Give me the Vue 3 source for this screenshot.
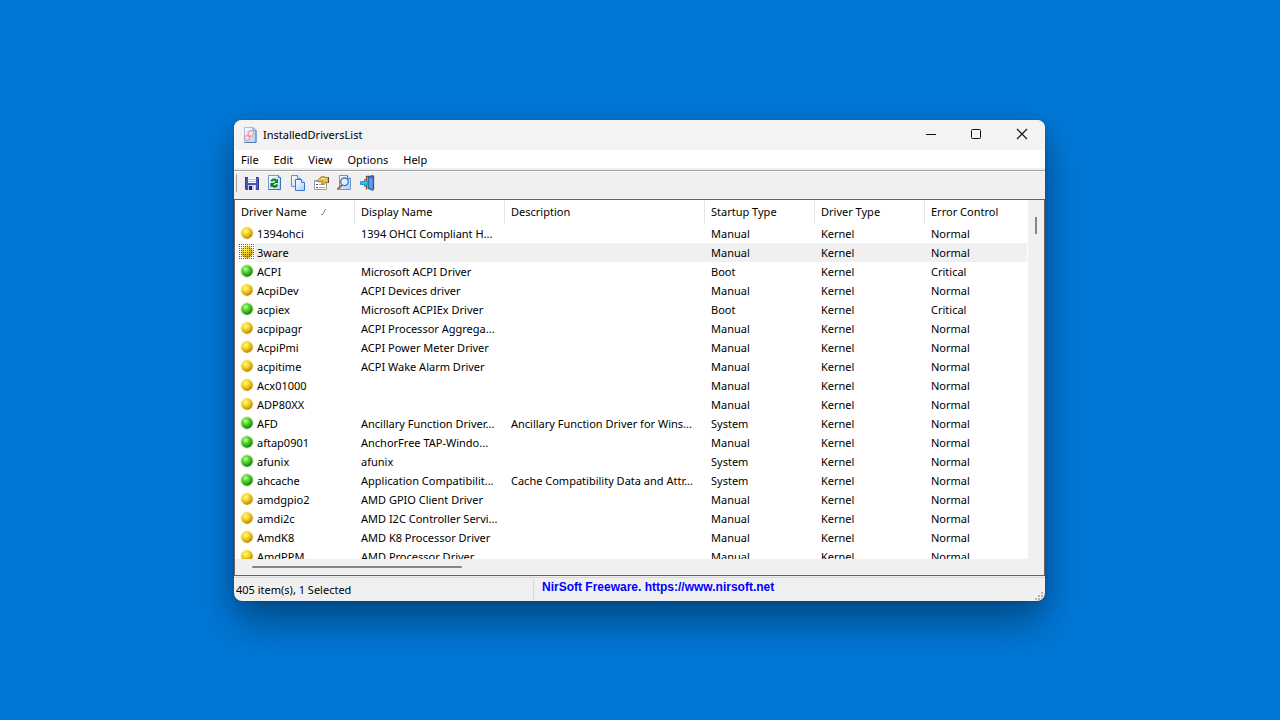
<script setup>
import { ref } from 'vue'

const menus = ['File', 'Edit', 'View', 'Options', 'Help']
const columns = ['Driver Name', 'Display Name', 'Description', 'Startup Type', 'Driver Type', 'Error Control']
const selected = ref('3ware')

const drivers = [
  ['1394ohci', '1394 OHCI Compliant H...', '', 'Manual', 'Normal', false],
  ['3ware', '', '', 'Manual', 'Normal', false],
  ['ACPI', 'Microsoft ACPI Driver', '', 'Boot', 'Critical', true],
  ['AcpiDev', 'ACPI Devices driver', '', 'Manual', 'Normal', false],
  ['acpiex', 'Microsoft ACPIEx Driver', '', 'Boot', 'Critical', true],
  ['acpipagr', 'ACPI Processor Aggrega...', '', 'Manual', 'Normal', false],
  ['AcpiPmi', 'ACPI Power Meter Driver', '', 'Manual', 'Normal', false],
  ['acpitime', 'ACPI Wake Alarm Driver', '', 'Manual', 'Normal', false],
  ['Acx01000', '', '', 'Manual', 'Normal', false],
  ['ADP80XX', '', '', 'Manual', 'Normal', false],
  ['AFD', 'Ancillary Function Driver...', 'Ancillary Function Driver for Wins...', 'System', 'Normal', true],
  ['aftap0901', 'AnchorFree TAP-Windo...', '', 'Manual', 'Normal', true],
  ['afunix', 'afunix', '', 'System', 'Normal', true],
  ['ahcache', 'Application Compatibilit...', 'Cache Compatibility Data and Attr...', 'System', 'Normal', true],
  ['amdgpio2', 'AMD GPIO Client Driver', '', 'Manual', 'Normal', false],
  ['amdi2c', 'AMD I2C Controller Servi...', '', 'Manual', 'Normal', false],
  ['AmdK8', 'AMD K8 Processor Driver', '', 'Manual', 'Normal', false],
  ['AmdPPM', 'AMD Processor Driver', '', 'Manual', 'Normal', false],
].map(([name, display, description, startup, error, running]) => ({
  name, display, description, startup, error, running,
}))
</script>

<template>
  <div class="desktop">
    <svg class="defs" width="0" height="0" aria-hidden="true">
      <defs>
        <radialGradient id="ballYellow" cx="38%" cy="32%" r="70%">
          <stop offset="0" stop-color="#fff7a0" />
          <stop offset="0.4" stop-color="#f6d92c" />
          <stop offset="0.8" stop-color="#d8a20c" />
          <stop offset="1" stop-color="#a87400" />
        </radialGradient>
        <radialGradient id="ballGreen" cx="38%" cy="32%" r="70%">
          <stop offset="0" stop-color="#c4ff9c" />
          <stop offset="0.4" stop-color="#5ed436" />
          <stop offset="0.8" stop-color="#2c9c14" />
          <stop offset="1" stop-color="#187008" />
        </radialGradient>
        <linearGradient id="sheet" x1="0" y1="0" x2="1" y2="1">
          <stop offset="0" stop-color="#ffffff" />
          <stop offset="1" stop-color="#a9d0f8" />
        </linearGradient>
        <pattern id="dither" width="2" height="2" patternUnits="userSpaceOnUse">
          <rect width="1" height="1" fill="#0078d7" shape-rendering="crispEdges" />
        </pattern>
      </defs>
    </svg>

    <main class="window">
      <header class="titlebar">
        <svg class="app-icon" width="16" height="16" viewBox="0 0 16 16" aria-hidden="true">
          <path d="M2.500 .5h8.500l3 3v12h-11.500z" fill="url(#sheet)" stroke="#a4c2e4" />
          <path d="M2.500 15.500h11.500v-12" fill="none" stroke="#4f7cb8" />
          <path d="M11 .5v3h3z" fill="#dcecff" stroke="#5b8cc8" stroke-width=".7" />
          <circle cx="9" cy="6.500" r="2.800" fill="#f4e4f0" stroke="#eb98a6" stroke-width="1.600" stroke-dasharray="1.700 .4" />
          <circle cx="5" cy="11" r="2.500" fill="#f4e4f0" stroke="#eb98a6" stroke-width="1.600" stroke-dasharray="1.700 .4" />
        </svg>
        <h1>InstalledDriversList</h1>
        <div class="captions">
          <button type="button" aria-label="Minimize">
            <svg width="12" height="12" viewBox="0 0 12 12"><path d="M2 6.500h10" stroke="#111" /></svg>
          </button>
          <button type="button" aria-label="Maximize">
            <svg width="12" height="12" viewBox="0 0 12 12"><rect x="1.500" y="1.500" width="9" height="9" rx="1" fill="none" stroke="#111" /></svg>
          </button>
          <button type="button" aria-label="Close">
            <svg width="12" height="12" viewBox="0 0 12 12"><path d="M1 1l10 10M11 1L1 11" stroke="#111" stroke-width="1.100" /></svg>
          </button>
        </div>
      </header>

      <nav class="menubar">
        <button v-for="m in menus" :key="m" type="button">{{ m }}</button>
      </nav>

      <div class="toolbar" role="toolbar">
        <button type="button" aria-label="Save">
          <svg width="16" height="16" viewBox="0 0 16 16">
            <path d="M1 2h13l1 1v12H2l-1-1z" fill="#4a55b4" />
            <path d="M1.500 2.500h12.500l.5.5v11.500h-12.500l-.5-.5z" fill="none" stroke="#323c96" />
            <rect x="4" y="2" width="8" height="6" fill="#f4f7ff" />
            <path d="M4 4.500h8M4 6.500h8" stroke="#b6bfde" />
            <rect x="4" y="10" width="8" height="5" fill="#c3cbe8" />
            <rect x="5" y="11" width="3" height="4" fill="#1f2870" />
            <path d="M10.500 10v5" stroke="#fff" />
          </svg>
        </button>
        <button type="button" aria-label="Refresh">
          <svg width="16" height="16" viewBox="0 0 16 16">
            <path d="M1.500 .5h10l2 2v12h-12z" fill="url(#sheet)" stroke="#6f9edc" />
            <path d="M1.500 14.500h12v-12" fill="none" stroke="#3c70b8" />
            <path d="M11.500 .5v2h2" fill="#fff" stroke="#3c70b8" />
            <path d="M4.500 6.500c.3-2 3-2.800 4.500-1" fill="none" stroke="#0d8a12" stroke-width="2" />
            <path d="M11 3.500v4.500H6.500z" fill="#0d8a12" />
            <path d="M10 9.500c-.3 2-3 2.800-4.500 1" fill="none" stroke="#086c10" stroke-width="2" />
            <path d="M3.500 12.500V8H8z" fill="#086c10" />
          </svg>
        </button>
        <button type="button" aria-label="Copy">
          <svg width="16" height="16" viewBox="0 0 16 16">
            <path d="M1.500 .5h6l3 3v8h-9z" fill="url(#sheet)" stroke="#5b8fd8" />
            <path d="M7.500 .5v3h3" fill="#fff" stroke="#5b8fd8" />
            <path d="M5.500 4.500h6l3 3v8h-9z" fill="url(#sheet)" stroke="#3c75c8" />
            <path d="M11.500 4.500v3h3" fill="#fff" stroke="#3c75c8" />
          </svg>
        </button>
        <button type="button" aria-label="Properties">
          <svg width="16" height="16" viewBox="0 0 16 16">
            <path d="M1.500 5.500h12v9h-12z" fill="#fff" stroke="#999" />
            <path d="M2 6.500h11" stroke="#b4b4b4" />
            <path d="M3 9.500h2M3 12.500h2" stroke="#285cb4" />
            <path d="M6 9.500h6M6 12.500h6" stroke="#a0a0a0" />
            <path d="M4.500 5.500l3.500-3.500 3-.5 2 1h3v5h-3l-2 1-1 1-1.500-.5 1-2.500-3 .5-1.500-.5z" fill="#e4ba48" stroke="#907028" stroke-width=".8" />
            <path d="M8 4l3-.5 2 1" fill="none" stroke="#fff0a0" />
            <path d="M15 2h1v6h-1z" fill="#604c24" />
          </svg>
        </button>
        <button type="button" aria-label="Find">
          <svg width="16" height="16" viewBox="0 0 16 16">
            <path d="M3.500 .5h8l3 3v11h-11z" fill="url(#sheet)" stroke="#6598dc" />
            <path d="M11.500 .5v3h3" fill="#fff" stroke="#3f78c4" />
            <path d="M5.500 10.500L2 14" stroke="#a86c38" stroke-width="2.200" stroke-linecap="round" />
            <circle cx="8.500" cy="6.800" r="3.800" fill="#d8f0ff" stroke="#5278a8" stroke-width="1.400" />
            <path d="M6.500 6.500c.2-1 1-1.500 2-1.500" fill="none" stroke="#fff" />
          </svg>
        </button>
        <button type="button" aria-label="Exit">
          <svg width="16" height="16" viewBox="0 0 16 16">
            <path d="M7.500 14.500v-13h7v13" fill="#f0f0f0" stroke="#a04c28" stroke-width="1.400" />
            <path d="M9 2l5-1.500v15l-5-2z" fill="#3f82d8" stroke="#1c4888" stroke-width=".8" />
            <path d="M11 4v8.500M13 3.500v10" stroke="#72b4f4" />
            <path d="M1.500 6.500h4v-2.500l4 4-4 4v-2.500h-4z" fill="#20c4ec" stroke="#0878b4" stroke-width=".7" />
          </svg>
        </button>
      </div>

      <section class="listview">
        <div class="rows">
          <table>
            <colgroup>
              <col class="c-name" /><col class="c-display" /><col class="c-desc" />
              <col class="c-type" /><col class="c-type" /><col />
            </colgroup>
            <thead>
              <tr>
                <th v-for="(c, i) in columns" :key="c" scope="col">
                  {{ c }}
                  <svg v-if="i === 0" class="sort" width="8" height="8" viewBox="0 0 8 8" aria-hidden="true">
                    <path d="M1 6.500h2l2-5h1" fill="none" stroke="#8c8c8c" />
                  </svg>
                </th>
              </tr>
            </thead>
            <tbody>
              <tr v-for="d in drivers" :key="d.name" :class="{ selected: d.name === selected }" @click="selected = d.name">
                <td class="name">
                  <svg width="16" height="16" viewBox="0 0 16 16" aria-hidden="true">
                    <circle cx="8" cy="8" r="7" :fill="d.running ? '#a8ec90' : '#fff08c'" opacity=".45" />
                    <circle cx="8" cy="8" r="5.700" :fill="d.running ? 'url(#ballGreen)' : 'url(#ballYellow)'" />
                    <rect v-if="d.name === selected" width="16" height="16" fill="url(#dither)" />
                  </svg>
                  <span>{{ d.name }}</span>
                </td>
                <td>{{ d.display }}</td>
                <td>{{ d.description }}</td>
                <td>{{ d.startup }}</td>
                <td>Kernel</td>
                <td>{{ d.error }}</td>
              </tr>
            </tbody>
          </table>
        </div>
        <div class="vscroll"><div class="vthumb"></div></div>
        <div class="hscroll"><div class="hthumb"></div></div>
      </section>

      <footer class="statusbar">
        <span class="count">405 item(s), 1 Selected</span>
        <a href="https://www.nirsoft.net">NirSoft Freeware. https://www.nirsoft.net</a>
        <svg class="grip" width="8" height="8" viewBox="0 0 8 8" aria-hidden="true">
          <path d="M6 0h2v2H6zM3 3h2v2H3zM6 3h2v2H6zM0 6h2v2H0zM3 6h2v2H3zM6 6h2v2H6z" fill="#b8b8b8" />
        </svg>
      </footer>
    </main>
  </div>
</template>

<style>
body {
  margin: 0;
}
</style>

<style scoped>
.desktop {
  box-sizing: border-box;
  height: 100vh;
  min-height: 420px;
  padding: 120px 235px 119px 234px;
  background: #0078d7;
  font: 11px/16px "Noto Sans", "Open Sans", sans-serif;
  color: #000;
}
.defs {
  position: absolute;
}
button {
  border: 0;
  padding: 0;
  background: transparent;
  font: inherit;
  color: inherit;
}
button svg {
  display: block;
}
.window {
  display: flex;
  flex-direction: column;
  height: 100%;
  overflow: hidden;
  border-radius: 8px;
  background: #f0f0f0;
  box-shadow: 0 0 1px rgba(0, 0, 0, 0.5), 0 22px 40px rgba(0, 0, 0, 0.36), 0 2px 20px rgba(0, 0, 0, 0.12);
}
.titlebar {
  display: flex;
  align-items: center;
  height: 30px;
  padding-left: 8px;
  background: #f3f3f3;
}
.titlebar h1 {
  margin: 0 0 0 5px;
  font-size: 11px;
  font-weight: 400;
}
.captions {
  display: flex;
  height: 100%;
  margin-left: auto;
}
.captions button {
  display: grid;
  place-items: center;
  width: 46px;
  padding-bottom: 2px;
}
.menubar {
  display: flex;
  gap: 1px;
  height: 18px;
  background: #fff;
  border-bottom: 2px solid #f0f0f0;
}
.menubar button {
  padding: 2px 7px 0;
}
.toolbar {
  display: flex;
  align-items: center;
  height: 23px;
  padding: 0 2px 5px;
  border-top: 1px solid #a0a0a0;
  box-shadow: inset 0 1px #fff;
}
.toolbar::before {
  content: "";
  width: 1px;
  height: 18px;
  margin-right: 3px;
  background: #a0a0a0;
}
.toolbar button {
  display: grid;
  place-items: center;
  width: 23px;
  height: 22px;
}
.listview {
  display: grid;
  grid-template: minmax(0, 1fr) 16px / minmax(0, 1fr) 16px;
  flex: 1;
  min-height: 0;
  border: 1px solid #646464;
}
.rows {
  overflow: hidden;
  padding-right: 1px;
  background: #fff;
}
table {
  width: 100%;
  table-layout: fixed;
  border-collapse: separate;
  border-spacing: 0;
}
.c-name { width: 120px; }
.c-display { width: 150px; }
.c-desc { width: 200px; }
.c-type { width: 110px; }
th,
td {
  overflow: hidden;
  padding: 0 6px;
  text-align: left;
  font-weight: 400;
  white-space: nowrap;
  text-overflow: ellipsis;
}
th {
  height: 24px;
  border-right: 1px solid #e5e5e5;
}
th:last-child {
  border-right: 0;
}
.sort {
  margin-left: 10px;
}
td {
  height: 19px;
  line-height: 19px;
}
.name {
  padding-left: 4px;
}
.name svg {
  display: inline-block;
  margin: 1px 2px 0 0;
  vertical-align: top;
}
.selected td {
  background: #f0f0f0;
}
.selected .name {
  background: linear-gradient(to right, #fff 20px, #f0f0f0 20px);
}
.vscroll {
  padding: 17px 7px;
}
.vthumb {
  width: 2px;
  height: 17px;
  background: #858585;
}
.hscroll {
  padding: 7px 17px;
}
.hthumb {
  width: 210px;
  height: 2px;
  border-radius: 1px;
  background: #858585;
}
.statusbar {
  display: flex;
  align-items: stretch;
  height: 22px;
  margin-top: 1px;
  padding: 0 2px 1px;
  border-top: 1px solid #d7d7d7;
}
.count {
  box-sizing: border-box;
  width: 298px;
  margin-top: 1px;
  padding-top: 3px;
  border-right: 1px solid #d7d7d7;
}
.statusbar a {
  padding: 1px 8px;
  font: bold 12px/16px "Liberation Sans", Arial, sans-serif;
  color: #00f;
  text-decoration: none;
}
.grip {
  align-self: flex-end;
  margin-left: auto;
}
</style>
